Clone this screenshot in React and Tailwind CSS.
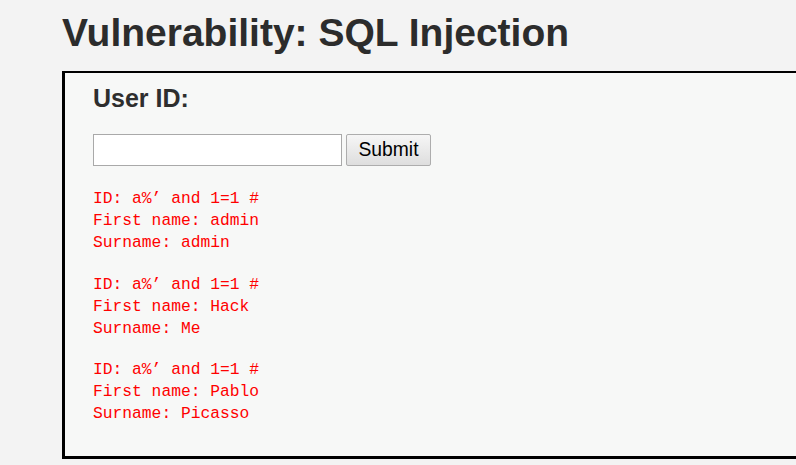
export default function App() {
  const rows = [
    { first: 'admin', last: 'admin' },
    { first: 'Hack', last: 'Me' },
    { first: 'Pablo', last: 'Picasso' },
  ];

  return (
    <div className="w-[796px] h-[465px] overflow-hidden bg-[#f3f3f3] pl-[62px] pt-[13px] font-['Liberation_Sans',Arial,sans-serif]">
      <h1 className="text-[39px] leading-[40px] font-bold text-[#2c2c2c] whitespace-nowrap">
        Vulnerability: SQL Injection
      </h1>

      <div className="mt-[18px] w-[800px] border-[#000] border-t-2 border-l-[3px] border-b-[3px] bg-[#f7f8f7] pl-[28px] pt-[10px] pb-[31px]">
        <h3 className="text-[25px] leading-[30px] font-bold text-[#2e2e2e]">User ID:</h3>

        <form className="mt-[21px] flex items-center gap-[4px]" onSubmit={(e) => e.preventDefault()}>
          <input
            type="text"
            className="w-[249px] h-[32px] bg-white border border-[#a9a9a9] outline-none px-1"
          />
          <button
            type="submit"
            className="w-[85px] h-[32px] rounded-[2px] border border-[#adadad] bg-gradient-to-b from-[#f6f6f6] to-[#dedede] text-[19.3px] text-black leading-none"
          >
            Submit
          </button>
        </form>

        <div className="mt-[22px] font-['Liberation_Mono','Courier_New',monospace] text-[16.3px] leading-[22px] text-[#ff0000]">
          {rows.map((r, i) => (
            <pre key={i} className={`font-['Liberation_Mono','Courier_New',monospace] ${i < rows.length - 1 ? 'mb-[19.5px]' : ''}`}>
              {`ID: a%’ and 1=1 #\nFirst name: ${r.first}\nSurname: ${r.last}`}
            </pre>
          ))}
        </div>
      </div>
    </div>
  );
}
